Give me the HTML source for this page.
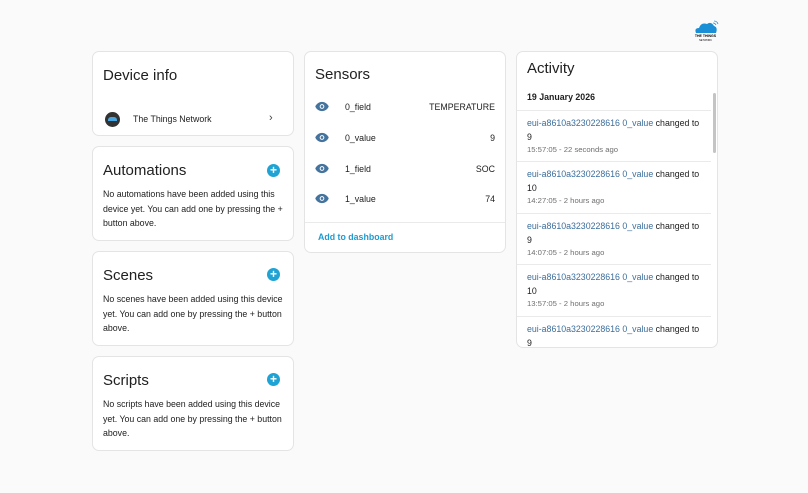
<!DOCTYPE html>
<html><head><style>
*{box-sizing:border-box;margin:0;padding:0}
body{width:808px;height:493px;background:#fafafa;font-family:"Liberation Sans",Arial,sans-serif;color:#212121;position:relative;overflow:hidden}
.card{position:absolute;background:#fff;border:1px solid #e4e4e4;border-radius:7px;overflow:hidden}
.t{position:absolute;font-size:15px;color:#212121}
.p{position:absolute;font-size:8.8px;line-height:14.5px;color:#212121;white-space:nowrap}
.plus{position:absolute;width:13px;height:13px;border-radius:50%;background:#1fa3d4;color:#fff;font-size:12px;line-height:13px;text-align:center;font-weight:bold}
.row{position:absolute;left:10px;right:10px;font-size:8.8px;height:14px;line-height:14px}
.row svg{position:absolute;left:0;top:1px}
.row .n{position:absolute;left:30px}
.row .v{position:absolute;right:0}
.act{position:absolute;left:0;right:6px;border-top:1px solid #eaeaea;padding:5px 10px;font-size:8.8px;line-height:14px;white-space:nowrap}
.act a{color:#3c6e9c;text-decoration:none}
.act .s{font-size:7.7px;color:#6f6f6f;line-height:11px}
</style></head><body>
<svg style="position:absolute;left:692px;top:20px" width="27" height="22" viewBox="0 0 27 22"><path d="M4 13 Q2 8 7 8 Q9 2 15 4 Q19 1 22 6 Q26 7 24 13Z" fill="#1a8fd6"/><path d="M21 3 Q23 3 24 5 M22 1 Q25 1 26 4" stroke="#1a8fd6" fill="none" stroke-width=".8"/><text x="13.5" y="17" font-size="3.5" text-anchor="middle" font-family="Liberation Sans" font-weight="bold">THE THINGS</text><text x="13.5" y="21" font-size="2.5" text-anchor="middle" font-family="Liberation Sans">NETWORK</text></svg>

<div class="card" style="left:92px;top:51px;width:202px;height:85px">
<div class="t" style="left:10px;top:15px">Device info</div>
<div style="position:absolute;left:12px;top:60px;width:15px;height:15px;border-radius:50%;background:#333"><div style="position:absolute;left:3px;top:5px;width:9px;height:4px;background:#4aa6e0;border-radius:3px 3px 0 0"></div></div>
<div style="position:absolute;left:40px;top:62px;font-size:8.8px">The Things Network</div>
<div style="position:absolute;left:176px;top:60px;font-size:11px;color:#444">›</div>
</div>

<div class="card" style="left:92px;top:146px;width:202px;height:95px">
<div class="t" style="left:10px;top:15px">Automations</div><div class="plus" style="left:174px;top:17px">+</div>
<div class="p" style="left:10px;top:40px">No automations have been added using this<br>device yet. You can add one by pressing the +<br>button above.</div>
</div>
<div class="card" style="left:92px;top:251px;width:202px;height:95px">
<div class="t" style="left:10px;top:15px">Scenes</div><div class="plus" style="left:174px;top:16px">+</div>
<div class="p" style="left:10px;top:40px">No scenes have been added using this device<br>yet. You can add one by pressing the + button<br>above.</div>
</div>
<div class="card" style="left:92px;top:356px;width:202px;height:95px">
<div class="t" style="left:10px;top:15px">Scripts</div><div class="plus" style="left:174px;top:16px">+</div>
<div class="p" style="left:10px;top:40px">No scripts have been added using this device<br>yet. You can add one by pressing the + button<br>above.</div>
</div>

<div class="card" style="left:304px;top:51px;width:202px;height:202px">
<div class="t" style="left:10px;top:14px">Sensors</div>
<div class="row" style="top:48px"><svg width="14" height="11" viewBox="0 0 24 18"><path d="M12 1C6.5 1 2 5 0.5 9 2 13 6.5 17 12 17s10-4 11.5-8C22 5 17.5 1 12 1z" fill="#44739e"/><circle cx="12" cy="9" r="4" fill="#fff"/><circle cx="12" cy="9" r="2.3" fill="#44739e"/></svg><span class="n">0_field</span><span class="v">TEMPERATURE</span></div>
<div class="row" style="top:79px"><svg width="14" height="11" viewBox="0 0 24 18"><path d="M12 1C6.5 1 2 5 0.5 9 2 13 6.5 17 12 17s10-4 11.5-8C22 5 17.5 1 12 1z" fill="#44739e"/><circle cx="12" cy="9" r="4" fill="#fff"/><circle cx="12" cy="9" r="2.3" fill="#44739e"/></svg><span class="n">0_value</span><span class="v">9</span></div>
<div class="row" style="top:110px"><svg width="14" height="11" viewBox="0 0 24 18"><path d="M12 1C6.5 1 2 5 0.5 9 2 13 6.5 17 12 17s10-4 11.5-8C22 5 17.5 1 12 1z" fill="#44739e"/><circle cx="12" cy="9" r="4" fill="#fff"/><circle cx="12" cy="9" r="2.3" fill="#44739e"/></svg><span class="n">1_field</span><span class="v">SOC</span></div>
<div class="row" style="top:140px"><svg width="14" height="11" viewBox="0 0 24 18"><path d="M12 1C6.5 1 2 5 0.5 9 2 13 6.5 17 12 17s10-4 11.5-8C22 5 17.5 1 12 1z" fill="#44739e"/><circle cx="12" cy="9" r="4" fill="#fff"/><circle cx="12" cy="9" r="2.3" fill="#44739e"/></svg><span class="n">1_value</span><span class="v">74</span></div>
<div style="position:absolute;left:0;right:0;top:170px;border-top:1px solid #eaeaea"></div>
<div style="position:absolute;left:13px;top:180px;font-size:8.8px;color:#1f9bd0;font-weight:bold">Add to dashboard</div>
</div>

<div class="card" style="left:516px;top:51px;width:202px;height:297px">
<div class="t" style="left:10px;top:8px">Activity</div>
<div style="position:absolute;left:10px;top:40px;font-size:8.8px;font-weight:bold">19 January 2026</div>
<div class="act" style="top:58px"><a>eui-a8610a3230228616 0_value</a> changed to<br>9<div class="s">15:57:05 - 22 seconds ago</div></div>
<div class="act" style="top:109px"><a>eui-a8610a3230228616 0_value</a> changed to<br>10<div class="s">14:27:05 - 2 hours ago</div></div>
<div class="act" style="top:161px"><a>eui-a8610a3230228616 0_value</a> changed to<br>9<div class="s">14:07:05 - 2 hours ago</div></div>
<div class="act" style="top:212px"><a>eui-a8610a3230228616 0_value</a> changed to<br>10<div class="s">13:57:05 - 2 hours ago</div></div>
<div class="act" style="top:264px;height:30px;overflow:hidden"><a>eui-a8610a3230228616 0_value</a> changed to<br>9</div>
<div style="position:absolute;left:196px;top:41px;width:3px;height:60px;background:#c4c4c4;border-radius:2px"></div>
</div>
</body></html>
